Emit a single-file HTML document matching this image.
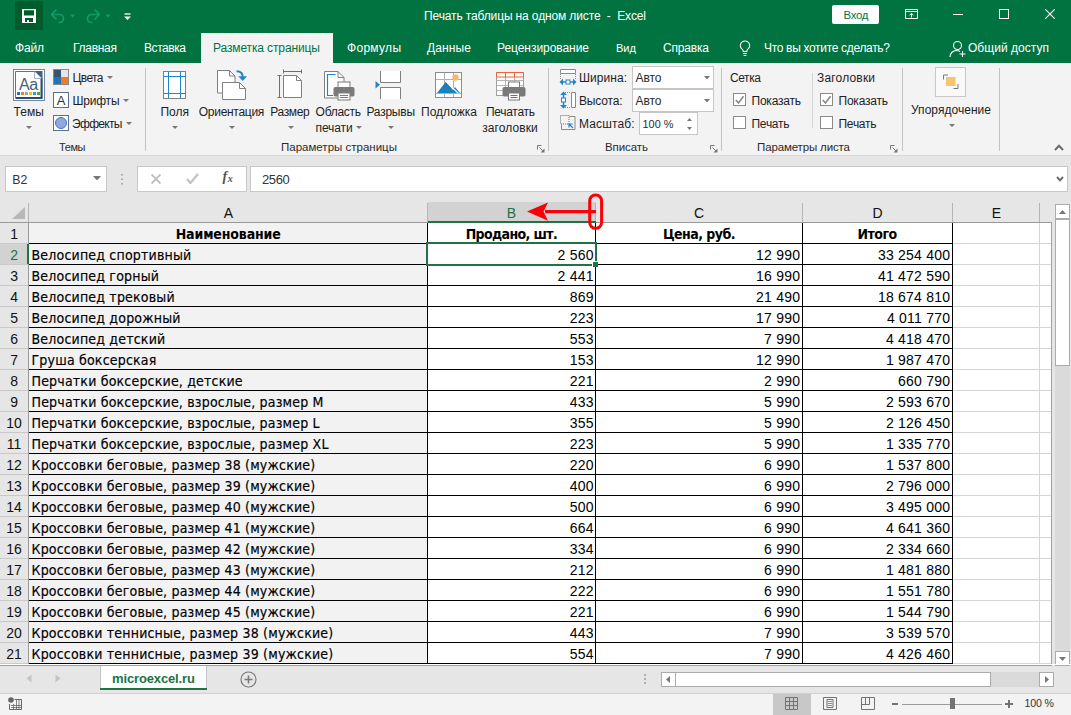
<!DOCTYPE html>
<html lang="ru"><head><meta charset="utf-8"><title>Печать таблицы на одном листе - Excel</title>
<style>
html,body{margin:0;padding:0}
body{width:1071px;height:715px;overflow:hidden;position:relative;background:#fff;font:12px "Liberation Sans",sans-serif;color:#1E1E1E}
.b{position:absolute;box-sizing:border-box;display:block}
.t{position:absolute;white-space:pre;line-height:20px;height:20px}
</style></head>
<body>
<div class="b" style="left:0px;top:0px;width:1071px;height:63px;background:#007341;"></div>
<div class="b" style="left:15px;top:1px;width:28px;height:29px;background:#005C2A;"></div>
<svg class="b" style="left:22px;top:9px" width="14" height="14" viewBox="0 0 14 14"><path d="M0 0h14v14H0z M2 1.300v5.200h10V1.300z M3 8.900V13h8V8.900z" fill="#fff" fill-rule="evenodd"/><rect x="5" y="11.200" width="2" height="1.800" fill="#fff"/></svg>
<svg class="b" style="left:49px;top:8px" width="30" height="16" viewBox="0 0 30 16"><path d="M2.500 6.500 L7.500 1.500 M2.500 6.500 L7.500 11.500 M2.500 6.500 H10.500 a4 4 0 0 1 0 8 H9.500" fill="none" stroke="#149A66" stroke-width="1.700"/><path d="M21 6.500h5l-2.500 3z" fill="#149A66"/></svg>
<svg class="b" style="left:85px;top:8px" width="30" height="16" viewBox="0 0 30 16"><path d="M14.500 6.500 L9.500 1.500 M14.500 6.500 L9.500 11.500 M14.500 6.500 H6.500 a4 4 0 0 0 0 8 H7.500" fill="none" stroke="#149A66" stroke-width="1.700"/><path d="M20.500 6.500h5l-2.500 3z" fill="#149A66"/></svg>
<svg class="b" style="left:124px;top:12.5px" width="7" height="8" viewBox="0 0 7 8"><path d="M0.500 1h6" stroke="#fff" stroke-width="1.300"/><path d="M0 3.500h7l-3.500 3.500z" fill="#fff"/></svg>
<span class="t" style="left:424.0px;top:6px;color:#fff;letter-spacing:-0.13px;">Печать таблицы на одном листе  -  Excel</span>
<div class="b" style="left:832px;top:5px;width:47px;height:19px;background:#fff;border-radius:2px"></div>
<span class="t" style="left:843.5px;top:5px;font-size:11.4px;color:#007341;letter-spacing:-0.26px;">Вход</span>
<svg class="b" style="left:905px;top:9px" width="13" height="10" viewBox="0 0 13 10"><path d="M0.5 0.5h12v9h-12z M0.5 2.5h12" fill="none" stroke="#fff" stroke-width="1"/><path d="M6.5 8.5V4.500 M4.500 6.300 6.500 4.300l2 2" fill="none" stroke="#fff" stroke-width="1"/></svg>
<div class="b" style="left:953px;top:14px;width:10px;height:1px;background:#fff;"></div>
<div class="b" style="left:999px;top:9px;width:10px;height:10px;border:1px solid #fff;"></div>
<svg class="b" style="left:1045px;top:9px" width="10" height="10" viewBox="0 0 10 10"><path d="M0.3 0.3l9.4 9.4M9.7 0.3l-9.4 9.4" stroke="#fff" stroke-width="1.1"/></svg>
<div class="b" style="left:201px;top:33px;width:132px;height:30px;background:#F3F3F3;"></div>
<span class="t" style="left:15.0px;top:38px;color:#fff;letter-spacing:-0.17px;">Файл</span>
<span class="t" style="left:73.0px;top:38px;color:#fff;letter-spacing:-0.28px;">Главная</span>
<span class="t" style="left:144.0px;top:38px;color:#fff;letter-spacing:-0.43px;">Вставка</span>
<span class="t" style="left:213.0px;top:38px;color:#007341;letter-spacing:-0.12px;">Разметка страницы</span>
<span class="t" style="left:347.0px;top:38px;color:#fff;letter-spacing:0.3px;">Формулы</span>
<span class="t" style="left:427.0px;top:38px;color:#fff;letter-spacing:0.13px;">Данные</span>
<span class="t" style="left:497.0px;top:38px;color:#fff;letter-spacing:-0.05px;">Рецензирование</span>
<span class="t" style="left:616.0px;top:38px;font-size:11.1px;color:#fff;letter-spacing:-0.04px;">Вид</span>
<span class="t" style="left:663.0px;top:38px;color:#fff;letter-spacing:-0.18px;">Справка</span>
<span class="t" style="left:764.0px;top:38px;color:#fff;letter-spacing:-0.32px;">Что вы хотите сделать?</span>
<span class="t" style="left:968.0px;top:38px;color:#fff;letter-spacing:0.03px;">Общий доступ</span>
<svg class="b" style="left:738.5px;top:40px" width="12" height="17" viewBox="0 0 12 17"><path d="M6 1a4.6 4.6 0 0 0-2.6 8.4c.5.5.8 1.2.8 2.1h3.6c0-.9.3-1.6.8-2.1A4.6 4.6 0 0 0 6 1z" fill="none" stroke="#fff" stroke-width="1.1"/><path d="M4.2 13.5h3.6M4.6 15.5h2.8" stroke="#fff" stroke-width="1.1"/></svg>
<svg class="b" style="left:948.5px;top:39.5px" width="18" height="18" viewBox="0 0 18 18"><circle cx="8.5" cy="5.5" r="4" fill="none" stroke="#fff" stroke-width="1.1"/><path d="M1 17c0-4 3-6.5 6.5-6.5 1.5 0 2.6.4 3.4 1" fill="none" stroke="#fff" stroke-width="1.1"/><path d="M13.5 11v6M10.5 14h6" stroke="#fff" stroke-width="1.1"/></svg>
<div class="b" style="left:0px;top:63px;width:1071px;height:92px;background:#F3F3F3;"></div>
<div class="b" style="left:0px;top:155px;width:1071px;height:1px;background:#D6D6D6;"></div>
<svg class="b" style="left:13px;top:69px" width="32" height="32" viewBox="0 0 32 32"><rect x="0.500" y="0.500" width="31" height="31" fill="#fff" stroke="#6F86A3"/>
<path d="M2.500 2.500H22l7 7V29.500H2.500z" fill="#fff" stroke="#5B7797" stroke-width="1"/>
<path d="M28.500 9v20H3" fill="none" stroke="#2F4B6B" stroke-width="2"/>
<path d="M21.500 2h8v8z" fill="#44607F"/><path d="M21.500 2.500v7h7" fill="#fff" stroke="#8A9DB5" stroke-width="0.800"/>
<text x="6" y="21" font-family="Liberation Sans, sans-serif" font-size="16" letter-spacing="-0.400" fill="#44607F">Aa</text>
<rect x="4" y="23" width="3" height="3" fill="#1E73BE"/><rect x="8" y="23" width="3" height="3" fill="#F47A20"/><rect x="12" y="23" width="3" height="3" fill="#A5A5A5"/><rect x="16" y="23" width="3" height="3" fill="#FFC000"/><rect x="20" y="23" width="3" height="3" fill="#2E9BD6"/><rect x="24" y="23" width="3" height="3" fill="#3DAE2B"/></svg>
<span class="t" style="left:13.4px;top:102px;letter-spacing:0.09px;">Темы</span>
<svg class="b" style="left:25.5px;top:126.0px" width="6" height="3" viewBox="0 0 6 3"><path d="M0 0h6l-3.0 3z" fill="#777"/></svg>
<svg class="b" style="left:53px;top:69px" width="16" height="16" viewBox="0 0 16 16"><rect x="0.5" y="0.5" width="15" height="15" fill="#E3E3E3" stroke="#8A8A8A"/><rect x="1" y="1" width="7" height="7" fill="#3A5272"/><rect x="8" y="1" width="7" height="7" fill="#E6E6E6"/><rect x="1" y="8" width="7" height="7" fill="#1E73BE"/><rect x="8" y="8" width="7" height="7" fill="#F47A20"/></svg>
<span class="t" style="left:72.5px;top:68px;letter-spacing:-0.61px;">Цвета</span>
<svg class="b" style="left:106.5px;top:76.0px" width="6" height="3" viewBox="0 0 6 3"><path d="M0 0h6l-3.0 3z" fill="#777"/></svg>
<svg class="b" style="left:53px;top:92px" width="16" height="16" viewBox="0 0 16 16"><rect x="0.5" y="0.5" width="15" height="15" fill="#fff" stroke="#5B6F8C"/><text x="8" y="13" text-anchor="middle" font-family="Liberation Sans, sans-serif" font-size="13" fill="#333">A</text></svg>
<span class="t" style="left:72.5px;top:91px;letter-spacing:-0.22px;">Шрифты</span>
<svg class="b" style="left:122.5px;top:99.0px" width="6" height="3" viewBox="0 0 6 3"><path d="M0 0h6l-3.0 3z" fill="#777"/></svg>
<svg class="b" style="left:53px;top:115px" width="16" height="16" viewBox="0 0 16 16"><rect x="0.5" y="0.5" width="15" height="15" fill="#fff" stroke="#5B6F8C"/><circle cx="8" cy="8" r="5.5" fill="#8EA9DB" stroke="#4472C4"/></svg>
<span class="t" style="left:72.0px;top:114px;letter-spacing:-0.68px;">Эффекты</span>
<svg class="b" style="left:125.5px;top:122.0px" width="6" height="3" viewBox="0 0 6 3"><path d="M0 0h6l-3.0 3z" fill="#777"/></svg>
<span class="t" style="left:59.0px;top:137px;font-size:11px;color:#2b2b2b;letter-spacing:-0.4px;">Темы</span>
<div class="b" style="left:145px;top:68px;width:1px;height:83px;background:#C2C2C2;"></div>
<svg class="b" style="left:163px;top:71px" width="24" height="28" viewBox="0 0 24 28"><rect x="0.5" y="0.5" width="22" height="27" fill="#fff" stroke="#808080"/><path d="M5.5 1v26M17.5 1v26M1 5.5h21M1 22.5h21" stroke="#1E87C9" stroke-width="1"/></svg>
<span class="t" style="left:160.5px;top:102px;letter-spacing:-0.02px;">Поля</span>
<svg class="b" style="left:171.5px;top:126.0px" width="6" height="3" viewBox="0 0 6 3"><path d="M0 0h6l-3.0 3z" fill="#777"/></svg>
<svg class="b" style="left:217px;top:69px" width="31" height="32" viewBox="0 0 31 32"><path d="M0.500 1.500H12.500l5.500 5.500v17H0.500z" fill="#fff" stroke="#808080"/><path d="M12.500 1.500V7h5.500" fill="none" stroke="#808080"/><path d="M5.500 13.500H22.500l6 6v11H5.500z" fill="#fff" stroke="#808080"/><path d="M22.500 13.500V19.500h6" fill="none" stroke="#808080"/><path d="M19.500 2.300c4 0 6.300 2.200 6.300 6.200" fill="none" stroke="#1E87C9" stroke-width="2"/><path d="M21.300 7.300l4.500 4.700 4.200-4.700z" fill="#1E87C9"/></svg>
<span class="t" style="left:198.8px;top:102px;letter-spacing:-0.29px;">Ориентация</span>
<svg class="b" style="left:228.5px;top:126.0px" width="6" height="3" viewBox="0 0 6 3"><path d="M0 0h6l-3.0 3z" fill="#777"/></svg>
<svg class="b" style="left:277px;top:69px" width="26" height="30" viewBox="0 0 26 30"><path d="M6.500 6.500H19.500l5 5v17H6.500z" fill="#fff" stroke="#808080"/><path d="M19.500 6.500V11.500h5" fill="none" stroke="#808080"/><path d="M6 2.500h19M6.500 0.500v4M24.500 0.500v4M2.500 6.500v22M0.500 6.500h4M0.500 28.500h4" stroke="#1E87C9" stroke-width="1"/></svg>
<span class="t" style="left:270.3px;top:102px;letter-spacing:-0.39px;">Размер</span>
<svg class="b" style="left:287.5px;top:126.0px" width="6" height="3" viewBox="0 0 6 3"><path d="M0 0h6l-3.0 3z" fill="#777"/></svg>
<svg class="b" style="left:324px;top:71px" width="32" height="32" viewBox="0 0 32 32"><path d="M0.500 0.500H14l6 6V27H0.500z" fill="#fff" stroke="#808080"/><path d="M14 0.500V6.500h6" fill="none" stroke="#808080"/><path d="M11.500 3.500H3.500v21H9" fill="none" stroke="#1E87C9" stroke-width="1.200"/><rect x="14" y="11" width="12" height="6" fill="#fff" stroke="#7A7A7A"/><rect x="9.5" y="16" width="21" height="9.500" rx="1.800" fill="#7A7A7A"/><rect x="14" y="22" width="12" height="7" fill="#fff" stroke="#7A7A7A"/><path d="M16 24.5h8M16 26.5h8" stroke="#7A7A7A" stroke-width="1"/></svg>
<span class="t" style="left:315.6px;top:102px;letter-spacing:-0.27px;">Область</span>
<span class="t" style="left:315.6px;top:118px;letter-spacing:-0.13px;">печати</span>
<svg class="b" style="left:355.5px;top:126.0px" width="6" height="3" viewBox="0 0 6 3"><path d="M0 0h6l-3.0 3z" fill="#777"/></svg>
<svg class="b" style="left:375px;top:71px" width="27" height="28" viewBox="0 0 27 28"><path d="M5.500 0v11.500h20V0M5.500 28v-11.500h20V28" fill="#fff" stroke="#808080"/><path d="M0.500 10l4.500 3.700L0.500 17.400z" fill="#1E87C9"/></svg>
<span class="t" style="left:366.5px;top:102px;letter-spacing:-0.24px;">Разрывы</span>
<svg class="b" style="left:387.5px;top:126.0px" width="6" height="3" viewBox="0 0 6 3"><path d="M0 0h6l-3.0 3z" fill="#777"/></svg>
<svg class="b" style="left:435px;top:72px" width="28" height="26" viewBox="0 0 28 26"><rect x="0.500" y="0.500" width="26" height="25" fill="#fff" stroke="#8C8C8C"/><path d="M1 7.500h25M1 21.500h25M9.500 1v24M18.500 1v24" stroke="#B0B0B0"/><circle cx="20.500" cy="5.500" r="3.200" fill="#F9B863"/><path d="M2 21l9-11.500 7 8.500 2-3 5 6z" fill="#1B7FC0"/><path d="M10.500 9l13 12.500" stroke="#fff" stroke-width="1.100"/></svg>
<span class="t" style="left:421.0px;top:102px;letter-spacing:0.01px;">Подложка</span>
<svg class="b" style="left:496px;top:72px" width="32" height="30" viewBox="0 0 32 30"><rect x="0.500" y="0.500" width="27" height="23" fill="#fff" stroke="#A0A0A0"/><path d="M1 8.500h26M1 13.500h26M1 18.500h26M9.500 5v18M18.500 5v18" stroke="#B5B5B5"/><path d="M0.500 0.500h27v4.500h-27zM9.500 0.500v4.500M18.500 0.500v4.500" fill="#fff" stroke="#F0623A" stroke-width="1"/><rect x="12.5" y="10" width="11" height="6" fill="#fff" stroke="#7A7A7A"/><rect x="6.5" y="15" width="23" height="9.500" rx="1.800" fill="#7A7A7A"/><rect x="12.5" y="21" width="11" height="7" fill="#fff" stroke="#7A7A7A"/><path d="M14.5 23.5h7M14.5 25.5h7" stroke="#1E87C9" stroke-width="1"/></svg>
<span class="t" style="left:486.0px;top:102px;letter-spacing:-0.3px;">Печатать</span>
<span class="t" style="left:482.2px;top:118px;letter-spacing:0.08px;">заголовки</span>
<span class="t" style="left:281.0px;top:137px;font-size:11.5px;color:#2b2b2b;">Параметры страницы</span>
<svg class="b" style="left:536.5px;top:144.5px" width="8" height="8" viewBox="0 0 8 8"><path d="M0.500 4.500V0.500H4.500" fill="none" stroke="#777" stroke-width="1"/><path d="M2.500 2.500L6 6" fill="none" stroke="#777" stroke-width="1"/><path d="M7.500 3.500v4h-4z" fill="#777"/></svg>
<div class="b" style="left:548px;top:68px;width:1px;height:83px;background:#C2C2C2;"></div>
<svg class="b" style="left:559px;top:69px" width="18" height="17" viewBox="0 0 18 17"><path d="M1.500 0.500h15v4h-15z" fill="#fff" stroke="#8A8A8A"/><path d="M1.500 5v6M16.500 5v6" stroke="#8A8A8A" stroke-width="1" stroke-dasharray="1 1"/><path d="M2 13h14" stroke="#1E87C9" stroke-width="1.500"/><path d="M0.500 13l3.500-3.500v7zM17.500 13l-3.500-3.500v7z" fill="#1E87C9"/><rect x="7" y="11" width="4" height="4" fill="#fff" stroke="#1E87C9"/></svg>
<svg class="b" style="left:559px;top:91px" width="18" height="18" viewBox="0 0 18 18"><path d="M12.500 1.500h4v15h-4z" fill="#fff" stroke="#8A8A8A"/><path d="M6 1.500h6M6 16.500h6" stroke="#8A8A8A" stroke-width="1" stroke-dasharray="1 1"/><path d="M4.500 2v14" stroke="#1E87C9" stroke-width="1.500"/><path d="M4.500 0.500l-3.500 3.500h7zM4.500 17.500l-3.500-3.500h7z" fill="#1E87C9"/><rect x="2.500" y="7" width="4" height="4" fill="#fff" stroke="#1E87C9"/></svg>
<svg class="b" style="left:560px;top:115px" width="16" height="16" viewBox="0 0 16 16"><rect x="0.500" y="0.500" width="8.500" height="8.500" fill="none" stroke="#666" stroke-dasharray="1 1"/><path d="M9.500 1.500h5.500v13h-13.500v-5" fill="none" stroke="#8A8A8A"/><path d="M13 13l-4-4M9 12.500V9h3.500" fill="none" stroke="#1E87C9" stroke-width="1.200"/></svg>
<span class="t" style="left:579.0px;top:68px;letter-spacing:0.05px;">Ширина:</span>
<span class="t" style="left:579.0px;top:91px;letter-spacing:-0.17px;">Высота:</span>
<span class="t" style="left:579.0px;top:114px;letter-spacing:0.12px;">Масштаб:</span>
<div class="b" style="left:632px;top:66px;width:82px;height:23px;background:#fff;border:1px solid #C6C6C6;"></div>
<div class="b" style="left:632px;top:89px;width:82px;height:23px;background:#fff;border:1px solid #C6C6C6;"></div>
<span class="t" style="left:635.5px;top:68px;color:#2b2b2b;letter-spacing:-0.05px;">Авто</span>
<svg class="b" style="left:703.5px;top:75.8px" width="6" height="3.5" viewBox="0 0 6 3.5"><path d="M0 0h6l-3.0 3.5z" fill="#777"/></svg>
<span class="t" style="left:635.5px;top:91px;color:#2b2b2b;letter-spacing:-0.05px;">Авто</span>
<svg class="b" style="left:703.5px;top:98.8px" width="6" height="3.5" viewBox="0 0 6 3.5"><path d="M0 0h6l-3.0 3.5z" fill="#777"/></svg>
<div class="b" style="left:639px;top:112px;width:59px;height:23px;background:#fff;border:1px solid #C6C6C6;"></div>
<span class="t" style="left:642.5px;top:114px;font-size:10.9px;color:#2b2b2b;letter-spacing:0.03px;">100 %</span>
<svg class="b" style="left:687px;top:117.5px" width="5" height="12" viewBox="0 0 5 12"><path d="M0 3l2.500-3 2.500 3zM0 9l2.500 3 2.500-3z" fill="#777"/></svg>
<span class="t" style="left:605.0px;top:137px;font-size:11.5px;color:#2b2b2b;letter-spacing:-0.08px;">Вписать</span>
<svg class="b" style="left:709.5px;top:144.5px" width="8" height="8" viewBox="0 0 8 8"><path d="M0.500 4.500V0.500H4.500" fill="none" stroke="#777" stroke-width="1"/><path d="M2.500 2.500L6 6" fill="none" stroke="#777" stroke-width="1"/><path d="M7.500 3.500v4h-4z" fill="#777"/></svg>
<div class="b" style="left:721px;top:68px;width:1px;height:83px;background:#C2C2C2;"></div>
<span class="t" style="left:730.0px;top:68px;letter-spacing:-0.41px;">Сетка</span>
<div class="b" style="left:733px;top:93px;width:13px;height:13px;background:#fff;border:1px solid #8A8A8A;"></div><svg class="b" style="left:735px;top:95px" width="10" height="10" viewBox="0 0 10 10"><path d="M0.800 5l2.700 3L8.500 1.200" fill="none" stroke="#8A8A8A" stroke-width="1.700"/></svg>
<span class="t" style="left:751.5px;top:91px;letter-spacing:-0.22px;">Показать</span>
<div class="b" style="left:733px;top:116px;width:13px;height:13px;background:#fff;border:1px solid #8A8A8A;"></div>
<span class="t" style="left:751.5px;top:114px;letter-spacing:-0.26px;">Печать</span>
<div class="b" style="left:812px;top:73px;width:1px;height:55px;background:#D4D4D4;"></div>
<span class="t" style="left:817.0px;top:68px;letter-spacing:0.18px;">Заголовки</span>
<div class="b" style="left:820px;top:93px;width:13px;height:13px;background:#fff;border:1px solid #8A8A8A;"></div><svg class="b" style="left:822px;top:95px" width="10" height="10" viewBox="0 0 10 10"><path d="M0.800 5l2.700 3L8.500 1.200" fill="none" stroke="#8A8A8A" stroke-width="1.700"/></svg>
<span class="t" style="left:838.5px;top:91px;letter-spacing:-0.22px;">Показать</span>
<div class="b" style="left:820px;top:116px;width:13px;height:13px;background:#fff;border:1px solid #8A8A8A;"></div>
<span class="t" style="left:838.5px;top:114px;letter-spacing:-0.26px;">Печать</span>
<span class="t" style="left:757.0px;top:137px;font-size:11.5px;color:#2b2b2b;letter-spacing:-0.14px;">Параметры листа</span>
<svg class="b" style="left:890px;top:144.5px" width="8" height="8" viewBox="0 0 8 8"><path d="M0.500 4.500V0.500H4.500" fill="none" stroke="#777" stroke-width="1"/><path d="M2.500 2.500L6 6" fill="none" stroke="#777" stroke-width="1"/><path d="M7.500 3.500v4h-4z" fill="#777"/></svg>
<div class="b" style="left:902px;top:68px;width:1px;height:83px;background:#C2C2C2;"></div>
<div class="b" style="left:935px;top:67px;width:31px;height:30px;background:#F9F9F9;border:1px solid #C8C8C8;"></div>
<svg class="b" style="left:942px;top:74px" width="17" height="16" viewBox="0 0 17 16"><path d="M1.500 5.500V1H6M11.500 14.500H16v-4.500" fill="none" stroke="#777" stroke-width="1"/><rect x="4" y="3" width="9.500" height="9" fill="#F9C56A"/></svg>
<span class="t" style="left:911.0px;top:100px;letter-spacing:0.03px;">Упорядочение</span>
<svg class="b" style="left:948.5px;top:124.0px" width="6" height="3" viewBox="0 0 6 3"><path d="M0 0h6l-3.0 3z" fill="#777"/></svg>
<div class="b" style="left:999px;top:68px;width:1px;height:83px;background:#C2C2C2;"></div>
<svg class="b" style="left:1053.5px;top:143.5px" width="10" height="7" viewBox="0 0 10 7"><path d="M1 6L5 1.800 9 6" fill="none" stroke="#6A6A6A" stroke-width="2"/></svg>
<div class="b" style="left:0px;top:156px;width:1071px;height:45px;background:#E6E6E6;"></div>
<div class="b" style="left:5px;top:166px;width:102px;height:26px;background:#fff;border:1px solid #C8C8C8;"></div>
<span class="t" style="left:12.3px;top:170px;font-size:12.3px;color:#333;letter-spacing:-0.05px;">B2</span>
<svg class="b" style="left:92.5px;top:175.8px" width="8" height="4.5" viewBox="0 0 8 4.5"><path d="M0 0h8l-4.0 4.5z" fill="#777"/></svg>
<svg class="b" style="left:121px;top:174px" width="2" height="11" viewBox="0 0 2 11"><path d="M0 0h2v1.500H0zM0 4.500h2V6H0zM0 9h2v1.500H0z" fill="#AAA"/></svg>
<div class="b" style="left:137px;top:166px;width:110px;height:26px;background:#fff;border:1px solid #C8C8C8;"></div>
<svg class="b" style="left:151px;top:174px" width="10" height="10" viewBox="0 0 10 10"><path d="M0.500 0.500l9 9M9.500 0.500l-9 9" stroke="#BDBDBD" stroke-width="1.900"/></svg>
<svg class="b" style="left:186px;top:173px" width="13" height="11" viewBox="0 0 13 11"><path d="M1 6l3.500 4L12 1" fill="none" stroke="#C4C4C4" stroke-width="2.400"/></svg>
<span class="t" style="left:222.500px;top:169px;font:italic bold 14px 'Liberation Serif',serif;color:#555">f<span style="font-size:10px;position:relative;top:1px;left:0.500px">x</span></span>
<div class="b" style="left:250px;top:166px;width:818px;height:26px;background:#fff;border:1px solid #C8C8C8;"></div>
<span class="t" style="left:262.0px;top:170px;font-size:13px;color:#333;letter-spacing:-0.41px;">2560</span>
<svg class="b" style="left:1055.5px;top:175.5px" width="8" height="6" viewBox="0 0 8 6"><path d="M1 1l3 3.300 3-3.300" fill="none" stroke="#666" stroke-width="1.900"/></svg>
<div class="b" style="left:0px;top:201px;width:1052px;height:464px;background:#fff;"></div>
<div class="b" style="left:0px;top:201px;width:1052px;height:21px;background:#E6E6E6;"></div>
<div class="b" style="left:0px;top:222px;width:28px;height:443px;background:#E6E6E6;"></div>
<div class="b" style="left:428px;top:202px;width:168px;height:20px;background:#D2D2D2;"></div>
<div class="b" style="left:0px;top:244px;width:28px;height:21px;background:#D2D2D2;"></div>
<div class="b" style="left:29px;top:223px;width:398px;height:441px;background:#F2F2F2;"></div>
<div class="b" style="left:28px;top:203px;width:1px;height:19px;background:#B5B5B5;"></div>
<div class="b" style="left:427px;top:203px;width:1px;height:19px;background:#B5B5B5;"></div>
<div class="b" style="left:595px;top:203px;width:1px;height:19px;background:#B5B5B5;"></div>
<div class="b" style="left:802px;top:203px;width:1px;height:19px;background:#B5B5B5;"></div>
<div class="b" style="left:952px;top:203px;width:1px;height:19px;background:#B5B5B5;"></div>
<div class="b" style="left:1039px;top:203px;width:1px;height:19px;background:#B5B5B5;"></div>
<div class="b" style="left:0px;top:222px;width:1052px;height:1px;background:#9A9A9A;"></div>
<div class="b" style="left:28px;top:222px;width:1px;height:443px;background:#ABABAB;"></div>
<div class="b" style="left:953px;top:243px;width:99px;height:1px;background:#D4D4D4;"></div>
<div class="b" style="left:0px;top:243px;width:28px;height:1px;background:#C9C9C9;"></div>
<div class="b" style="left:953px;top:264px;width:99px;height:1px;background:#D4D4D4;"></div>
<div class="b" style="left:0px;top:264px;width:28px;height:1px;background:#C9C9C9;"></div>
<div class="b" style="left:953px;top:285px;width:99px;height:1px;background:#D4D4D4;"></div>
<div class="b" style="left:0px;top:285px;width:28px;height:1px;background:#C9C9C9;"></div>
<div class="b" style="left:953px;top:306px;width:99px;height:1px;background:#D4D4D4;"></div>
<div class="b" style="left:0px;top:306px;width:28px;height:1px;background:#C9C9C9;"></div>
<div class="b" style="left:953px;top:327px;width:99px;height:1px;background:#D4D4D4;"></div>
<div class="b" style="left:0px;top:327px;width:28px;height:1px;background:#C9C9C9;"></div>
<div class="b" style="left:953px;top:348px;width:99px;height:1px;background:#D4D4D4;"></div>
<div class="b" style="left:0px;top:348px;width:28px;height:1px;background:#C9C9C9;"></div>
<div class="b" style="left:953px;top:369px;width:99px;height:1px;background:#D4D4D4;"></div>
<div class="b" style="left:0px;top:369px;width:28px;height:1px;background:#C9C9C9;"></div>
<div class="b" style="left:953px;top:390px;width:99px;height:1px;background:#D4D4D4;"></div>
<div class="b" style="left:0px;top:390px;width:28px;height:1px;background:#C9C9C9;"></div>
<div class="b" style="left:953px;top:411px;width:99px;height:1px;background:#D4D4D4;"></div>
<div class="b" style="left:0px;top:411px;width:28px;height:1px;background:#C9C9C9;"></div>
<div class="b" style="left:953px;top:432px;width:99px;height:1px;background:#D4D4D4;"></div>
<div class="b" style="left:0px;top:432px;width:28px;height:1px;background:#C9C9C9;"></div>
<div class="b" style="left:953px;top:453px;width:99px;height:1px;background:#D4D4D4;"></div>
<div class="b" style="left:0px;top:453px;width:28px;height:1px;background:#C9C9C9;"></div>
<div class="b" style="left:953px;top:474px;width:99px;height:1px;background:#D4D4D4;"></div>
<div class="b" style="left:0px;top:474px;width:28px;height:1px;background:#C9C9C9;"></div>
<div class="b" style="left:953px;top:495px;width:99px;height:1px;background:#D4D4D4;"></div>
<div class="b" style="left:0px;top:495px;width:28px;height:1px;background:#C9C9C9;"></div>
<div class="b" style="left:953px;top:516px;width:99px;height:1px;background:#D4D4D4;"></div>
<div class="b" style="left:0px;top:516px;width:28px;height:1px;background:#C9C9C9;"></div>
<div class="b" style="left:953px;top:537px;width:99px;height:1px;background:#D4D4D4;"></div>
<div class="b" style="left:0px;top:537px;width:28px;height:1px;background:#C9C9C9;"></div>
<div class="b" style="left:953px;top:558px;width:99px;height:1px;background:#D4D4D4;"></div>
<div class="b" style="left:0px;top:558px;width:28px;height:1px;background:#C9C9C9;"></div>
<div class="b" style="left:953px;top:579px;width:99px;height:1px;background:#D4D4D4;"></div>
<div class="b" style="left:0px;top:579px;width:28px;height:1px;background:#C9C9C9;"></div>
<div class="b" style="left:953px;top:600px;width:99px;height:1px;background:#D4D4D4;"></div>
<div class="b" style="left:0px;top:600px;width:28px;height:1px;background:#C9C9C9;"></div>
<div class="b" style="left:953px;top:621px;width:99px;height:1px;background:#D4D4D4;"></div>
<div class="b" style="left:0px;top:621px;width:28px;height:1px;background:#C9C9C9;"></div>
<div class="b" style="left:953px;top:642px;width:99px;height:1px;background:#D4D4D4;"></div>
<div class="b" style="left:0px;top:642px;width:28px;height:1px;background:#C9C9C9;"></div>
<div class="b" style="left:953px;top:663px;width:99px;height:1px;background:#D4D4D4;"></div>
<div class="b" style="left:0px;top:663px;width:28px;height:1px;background:#C9C9C9;"></div>
<div class="b" style="left:1039px;top:223px;width:1px;height:442px;background:#D4D4D4;"></div>
<div class="b" style="left:1051px;top:222px;width:1px;height:444px;background:#A0A0A0;"></div>
<div class="b" style="left:28px;top:243px;width:925px;height:1px;background:#000;"></div>
<div class="b" style="left:28px;top:264px;width:925px;height:1px;background:#000;"></div>
<div class="b" style="left:28px;top:285px;width:925px;height:1px;background:#000;"></div>
<div class="b" style="left:28px;top:306px;width:925px;height:1px;background:#000;"></div>
<div class="b" style="left:28px;top:327px;width:925px;height:1px;background:#000;"></div>
<div class="b" style="left:28px;top:348px;width:925px;height:1px;background:#000;"></div>
<div class="b" style="left:28px;top:369px;width:925px;height:1px;background:#000;"></div>
<div class="b" style="left:28px;top:390px;width:925px;height:1px;background:#000;"></div>
<div class="b" style="left:28px;top:411px;width:925px;height:1px;background:#000;"></div>
<div class="b" style="left:28px;top:432px;width:925px;height:1px;background:#000;"></div>
<div class="b" style="left:28px;top:453px;width:925px;height:1px;background:#000;"></div>
<div class="b" style="left:28px;top:474px;width:925px;height:1px;background:#000;"></div>
<div class="b" style="left:28px;top:495px;width:925px;height:1px;background:#000;"></div>
<div class="b" style="left:28px;top:516px;width:925px;height:1px;background:#000;"></div>
<div class="b" style="left:28px;top:537px;width:925px;height:1px;background:#000;"></div>
<div class="b" style="left:28px;top:558px;width:925px;height:1px;background:#000;"></div>
<div class="b" style="left:28px;top:579px;width:925px;height:1px;background:#000;"></div>
<div class="b" style="left:28px;top:600px;width:925px;height:1px;background:#000;"></div>
<div class="b" style="left:28px;top:621px;width:925px;height:1px;background:#000;"></div>
<div class="b" style="left:28px;top:642px;width:925px;height:1px;background:#000;"></div>
<div class="b" style="left:28px;top:663px;width:925px;height:1px;background:#000;"></div>
<div class="b" style="left:427px;top:223px;width:1px;height:441px;background:#000;"></div>
<div class="b" style="left:595px;top:223px;width:1px;height:441px;background:#000;"></div>
<div class="b" style="left:802px;top:223px;width:1px;height:441px;background:#000;"></div>
<div class="b" style="left:952px;top:223px;width:1px;height:441px;background:#000;"></div>
<div class="b" style="left:28px;top:222px;width:1px;height:442px;background:#9A9A9A;"></div>
<div class="b" style="left:428px;top:221px;width:168px;height:2px;background:#217346;"></div>
<div class="b" style="left:27px;top:244px;width:2px;height:20px;background:#217346;"></div>
<div class="b" style="left:426px;top:242px;width:171px;height:24px;border:2px solid #217346;background:transparent"></div>
<div class="b" style="left:592px;top:261px;width:6px;height:6px;background:#fff;"></div>
<div class="b" style="left:593px;top:262px;width:5px;height:5px;background:#217346;"></div>
<span class="t" style="left:223.8px;top:203px;font-size:14px;color:#111;">A</span>
<span class="t" style="left:506.8px;top:203px;font-size:14px;color:#217346;">B</span>
<span class="t" style="left:693.9px;top:203px;font-size:14px;color:#111;">C</span>
<span class="t" style="left:872.4px;top:203px;font-size:14px;color:#111;">D</span>
<span class="t" style="left:991.8px;top:203px;font-size:14px;color:#111;">E</span>
<span class="t" style="left:10.2px;top:224px;font-size:14px;color:#111;">1</span>
<span class="t" style="left:175.7px;top:224px;font-size:14px;font-weight:bold;font-family:'DejaVu Sans Condensed', 'DejaVu Sans', 'Liberation Sans', sans-serif;color:#000;letter-spacing:-0.13px;">Наименование</span>
<span class="t" style="left:465.7px;top:224px;font-size:14px;font-weight:bold;font-family:'DejaVu Sans Condensed', 'DejaVu Sans', 'Liberation Sans', sans-serif;color:#000;letter-spacing:-0.62px;">Продано, шт.</span>
<span class="t" style="left:662.9px;top:224px;font-size:14px;font-weight:bold;font-family:'DejaVu Sans Condensed', 'DejaVu Sans', 'Liberation Sans', sans-serif;color:#000;letter-spacing:-0.54px;">Цена, руб.</span>
<span class="t" style="left:857.6px;top:224px;font-size:14px;font-weight:bold;font-family:'DejaVu Sans Condensed', 'DejaVu Sans', 'Liberation Sans', sans-serif;color:#000;letter-spacing:-0.56px;">Итого</span>
<span class="t" style="left:10.2px;top:245px;font-size:14px;color:#217346;">2</span>
<span class="t" style="left:31.5px;top:245px;font-size:14px;font-family:'DejaVu Sans Condensed', 'DejaVu Sans', 'Liberation Sans', sans-serif;color:#000;letter-spacing:0.19px;-webkit-text-stroke:0.15px #000;">Велосипед спортивный</span>
<span class="t" style="left:557.6px;top:245px;font-size:14px;color:#000;letter-spacing:0.22px;">2 560</span>
<span class="t" style="left:756.1px;top:245px;font-size:14px;color:#000;letter-spacing:0.22px;">12 990</span>
<span class="t" style="left:877.9px;top:245px;font-size:14px;color:#000;letter-spacing:0.22px;">33 254 400</span>
<span class="t" style="left:10.2px;top:266px;font-size:14px;color:#111;">3</span>
<span class="t" style="left:31.5px;top:266px;font-size:14px;font-family:'DejaVu Sans Condensed', 'DejaVu Sans', 'Liberation Sans', sans-serif;color:#000;letter-spacing:0.19px;-webkit-text-stroke:0.15px #000;">Велосипед горный</span>
<span class="t" style="left:557.6px;top:266px;font-size:14px;color:#000;letter-spacing:0.22px;">2 441</span>
<span class="t" style="left:756.1px;top:266px;font-size:14px;color:#000;letter-spacing:0.22px;">16 990</span>
<span class="t" style="left:877.9px;top:266px;font-size:14px;color:#000;letter-spacing:0.22px;">41 472 590</span>
<span class="t" style="left:10.2px;top:287px;font-size:14px;color:#111;">4</span>
<span class="t" style="left:31.5px;top:287px;font-size:14px;font-family:'DejaVu Sans Condensed', 'DejaVu Sans', 'Liberation Sans', sans-serif;color:#000;letter-spacing:0.19px;-webkit-text-stroke:0.15px #000;">Велосипед трековый</span>
<span class="t" style="left:569.7px;top:287px;font-size:14px;color:#000;letter-spacing:0.22px;">869</span>
<span class="t" style="left:756.1px;top:287px;font-size:14px;color:#000;letter-spacing:0.22px;">21 490</span>
<span class="t" style="left:877.9px;top:287px;font-size:14px;color:#000;letter-spacing:0.22px;">18 674 810</span>
<span class="t" style="left:10.2px;top:308px;font-size:14px;color:#111;">5</span>
<span class="t" style="left:31.5px;top:308px;font-size:14px;font-family:'DejaVu Sans Condensed', 'DejaVu Sans', 'Liberation Sans', sans-serif;color:#000;letter-spacing:0.19px;-webkit-text-stroke:0.15px #000;">Велосипед дорожный</span>
<span class="t" style="left:569.7px;top:308px;font-size:14px;color:#000;letter-spacing:0.22px;">223</span>
<span class="t" style="left:756.1px;top:308px;font-size:14px;color:#000;letter-spacing:0.22px;">17 990</span>
<span class="t" style="left:887.0px;top:308px;font-size:14px;color:#000;letter-spacing:0.22px;">4 011 770</span>
<span class="t" style="left:10.2px;top:329px;font-size:14px;color:#111;">6</span>
<span class="t" style="left:31.5px;top:329px;font-size:14px;font-family:'DejaVu Sans Condensed', 'DejaVu Sans', 'Liberation Sans', sans-serif;color:#000;letter-spacing:0.19px;-webkit-text-stroke:0.15px #000;">Велосипед детский</span>
<span class="t" style="left:569.7px;top:329px;font-size:14px;color:#000;letter-spacing:0.22px;">553</span>
<span class="t" style="left:764.1px;top:329px;font-size:14px;color:#000;letter-spacing:0.22px;">7 990</span>
<span class="t" style="left:885.9px;top:329px;font-size:14px;color:#000;letter-spacing:0.22px;">4 418 470</span>
<span class="t" style="left:10.2px;top:350px;font-size:14px;color:#111;">7</span>
<span class="t" style="left:31.5px;top:350px;font-size:14px;font-family:'DejaVu Sans Condensed', 'DejaVu Sans', 'Liberation Sans', sans-serif;color:#000;letter-spacing:0.19px;-webkit-text-stroke:0.15px #000;">Груша боксерская</span>
<span class="t" style="left:569.7px;top:350px;font-size:14px;color:#000;letter-spacing:0.22px;">153</span>
<span class="t" style="left:756.1px;top:350px;font-size:14px;color:#000;letter-spacing:0.22px;">12 990</span>
<span class="t" style="left:885.9px;top:350px;font-size:14px;color:#000;letter-spacing:0.22px;">1 987 470</span>
<span class="t" style="left:10.2px;top:371px;font-size:14px;color:#111;">8</span>
<span class="t" style="left:31.5px;top:371px;font-size:14px;font-family:'DejaVu Sans Condensed', 'DejaVu Sans', 'Liberation Sans', sans-serif;color:#000;letter-spacing:0.19px;-webkit-text-stroke:0.15px #000;">Перчатки боксерские, детские</span>
<span class="t" style="left:569.7px;top:371px;font-size:14px;color:#000;letter-spacing:0.22px;">221</span>
<span class="t" style="left:764.1px;top:371px;font-size:14px;color:#000;letter-spacing:0.22px;">2 990</span>
<span class="t" style="left:898.1px;top:371px;font-size:14px;color:#000;letter-spacing:0.22px;">660 790</span>
<span class="t" style="left:10.2px;top:392px;font-size:14px;color:#111;">9</span>
<span class="t" style="left:31.5px;top:392px;font-size:14px;font-family:'DejaVu Sans Condensed', 'DejaVu Sans', 'Liberation Sans', sans-serif;color:#000;letter-spacing:0.19px;-webkit-text-stroke:0.15px #000;">Перчатки боксерские, взрослые, размер M</span>
<span class="t" style="left:569.7px;top:392px;font-size:14px;color:#000;letter-spacing:0.22px;">433</span>
<span class="t" style="left:764.1px;top:392px;font-size:14px;color:#000;letter-spacing:0.22px;">5 990</span>
<span class="t" style="left:885.9px;top:392px;font-size:14px;color:#000;letter-spacing:0.22px;">2 593 670</span>
<span class="t" style="left:6.3px;top:413px;font-size:14px;color:#111;">10</span>
<span class="t" style="left:31.5px;top:413px;font-size:14px;font-family:'DejaVu Sans Condensed', 'DejaVu Sans', 'Liberation Sans', sans-serif;color:#000;letter-spacing:0.19px;-webkit-text-stroke:0.15px #000;">Перчатки боксерские, взрослые, размер L</span>
<span class="t" style="left:569.7px;top:413px;font-size:14px;color:#000;letter-spacing:0.22px;">355</span>
<span class="t" style="left:764.1px;top:413px;font-size:14px;color:#000;letter-spacing:0.22px;">5 990</span>
<span class="t" style="left:885.9px;top:413px;font-size:14px;color:#000;letter-spacing:0.22px;">2 126 450</span>
<span class="t" style="left:6.8px;top:434px;font-size:14px;color:#111;">11</span>
<span class="t" style="left:31.5px;top:434px;font-size:14px;font-family:'DejaVu Sans Condensed', 'DejaVu Sans', 'Liberation Sans', sans-serif;color:#000;letter-spacing:0.19px;-webkit-text-stroke:0.15px #000;">Перчатки боксерские, взрослые, размер XL</span>
<span class="t" style="left:569.7px;top:434px;font-size:14px;color:#000;letter-spacing:0.22px;">223</span>
<span class="t" style="left:764.1px;top:434px;font-size:14px;color:#000;letter-spacing:0.22px;">5 990</span>
<span class="t" style="left:885.9px;top:434px;font-size:14px;color:#000;letter-spacing:0.22px;">1 335 770</span>
<span class="t" style="left:6.3px;top:455px;font-size:14px;color:#111;">12</span>
<span class="t" style="left:31.5px;top:455px;font-size:14px;font-family:'DejaVu Sans Condensed', 'DejaVu Sans', 'Liberation Sans', sans-serif;color:#000;letter-spacing:0.19px;-webkit-text-stroke:0.15px #000;">Кроссовки беговые, размер 38 (мужские)</span>
<span class="t" style="left:569.7px;top:455px;font-size:14px;color:#000;letter-spacing:0.22px;">220</span>
<span class="t" style="left:764.1px;top:455px;font-size:14px;color:#000;letter-spacing:0.22px;">6 990</span>
<span class="t" style="left:885.9px;top:455px;font-size:14px;color:#000;letter-spacing:0.22px;">1 537 800</span>
<span class="t" style="left:6.3px;top:476px;font-size:14px;color:#111;">13</span>
<span class="t" style="left:31.5px;top:476px;font-size:14px;font-family:'DejaVu Sans Condensed', 'DejaVu Sans', 'Liberation Sans', sans-serif;color:#000;letter-spacing:0.19px;-webkit-text-stroke:0.15px #000;">Кроссовки беговые, размер 39 (мужские)</span>
<span class="t" style="left:569.7px;top:476px;font-size:14px;color:#000;letter-spacing:0.22px;">400</span>
<span class="t" style="left:764.1px;top:476px;font-size:14px;color:#000;letter-spacing:0.22px;">6 990</span>
<span class="t" style="left:885.9px;top:476px;font-size:14px;color:#000;letter-spacing:0.22px;">2 796 000</span>
<span class="t" style="left:6.3px;top:497px;font-size:14px;color:#111;">14</span>
<span class="t" style="left:31.5px;top:497px;font-size:14px;font-family:'DejaVu Sans Condensed', 'DejaVu Sans', 'Liberation Sans', sans-serif;color:#000;letter-spacing:0.19px;-webkit-text-stroke:0.15px #000;">Кроссовки беговые, размер 40 (мужские)</span>
<span class="t" style="left:569.7px;top:497px;font-size:14px;color:#000;letter-spacing:0.22px;">500</span>
<span class="t" style="left:764.1px;top:497px;font-size:14px;color:#000;letter-spacing:0.22px;">6 990</span>
<span class="t" style="left:885.9px;top:497px;font-size:14px;color:#000;letter-spacing:0.22px;">3 495 000</span>
<span class="t" style="left:6.3px;top:518px;font-size:14px;color:#111;">15</span>
<span class="t" style="left:31.5px;top:518px;font-size:14px;font-family:'DejaVu Sans Condensed', 'DejaVu Sans', 'Liberation Sans', sans-serif;color:#000;letter-spacing:0.19px;-webkit-text-stroke:0.15px #000;">Кроссовки беговые, размер 41 (мужские)</span>
<span class="t" style="left:569.7px;top:518px;font-size:14px;color:#000;letter-spacing:0.22px;">664</span>
<span class="t" style="left:764.1px;top:518px;font-size:14px;color:#000;letter-spacing:0.22px;">6 990</span>
<span class="t" style="left:885.9px;top:518px;font-size:14px;color:#000;letter-spacing:0.22px;">4 641 360</span>
<span class="t" style="left:6.3px;top:539px;font-size:14px;color:#111;">16</span>
<span class="t" style="left:31.5px;top:539px;font-size:14px;font-family:'DejaVu Sans Condensed', 'DejaVu Sans', 'Liberation Sans', sans-serif;color:#000;letter-spacing:0.19px;-webkit-text-stroke:0.15px #000;">Кроссовки беговые, размер 42 (мужские)</span>
<span class="t" style="left:569.7px;top:539px;font-size:14px;color:#000;letter-spacing:0.22px;">334</span>
<span class="t" style="left:764.1px;top:539px;font-size:14px;color:#000;letter-spacing:0.22px;">6 990</span>
<span class="t" style="left:885.9px;top:539px;font-size:14px;color:#000;letter-spacing:0.22px;">2 334 660</span>
<span class="t" style="left:6.3px;top:560px;font-size:14px;color:#111;">17</span>
<span class="t" style="left:31.5px;top:560px;font-size:14px;font-family:'DejaVu Sans Condensed', 'DejaVu Sans', 'Liberation Sans', sans-serif;color:#000;letter-spacing:0.19px;-webkit-text-stroke:0.15px #000;">Кроссовки беговые, размер 43 (мужские)</span>
<span class="t" style="left:569.7px;top:560px;font-size:14px;color:#000;letter-spacing:0.22px;">212</span>
<span class="t" style="left:764.1px;top:560px;font-size:14px;color:#000;letter-spacing:0.22px;">6 990</span>
<span class="t" style="left:885.9px;top:560px;font-size:14px;color:#000;letter-spacing:0.22px;">1 481 880</span>
<span class="t" style="left:6.3px;top:581px;font-size:14px;color:#111;">18</span>
<span class="t" style="left:31.5px;top:581px;font-size:14px;font-family:'DejaVu Sans Condensed', 'DejaVu Sans', 'Liberation Sans', sans-serif;color:#000;letter-spacing:0.19px;-webkit-text-stroke:0.15px #000;">Кроссовки беговые, размер 44 (мужские)</span>
<span class="t" style="left:569.7px;top:581px;font-size:14px;color:#000;letter-spacing:0.22px;">222</span>
<span class="t" style="left:764.1px;top:581px;font-size:14px;color:#000;letter-spacing:0.22px;">6 990</span>
<span class="t" style="left:885.9px;top:581px;font-size:14px;color:#000;letter-spacing:0.22px;">1 551 780</span>
<span class="t" style="left:6.3px;top:602px;font-size:14px;color:#111;">19</span>
<span class="t" style="left:31.5px;top:602px;font-size:14px;font-family:'DejaVu Sans Condensed', 'DejaVu Sans', 'Liberation Sans', sans-serif;color:#000;letter-spacing:0.19px;-webkit-text-stroke:0.15px #000;">Кроссовки беговые, размер 45 (мужские)</span>
<span class="t" style="left:569.7px;top:602px;font-size:14px;color:#000;letter-spacing:0.22px;">221</span>
<span class="t" style="left:764.1px;top:602px;font-size:14px;color:#000;letter-spacing:0.22px;">6 990</span>
<span class="t" style="left:885.9px;top:602px;font-size:14px;color:#000;letter-spacing:0.22px;">1 544 790</span>
<span class="t" style="left:6.3px;top:623px;font-size:14px;color:#111;">20</span>
<span class="t" style="left:31.5px;top:623px;font-size:14px;font-family:'DejaVu Sans Condensed', 'DejaVu Sans', 'Liberation Sans', sans-serif;color:#000;letter-spacing:0.19px;-webkit-text-stroke:0.15px #000;">Кроссовки теннисные, размер 38 (мужские)</span>
<span class="t" style="left:569.7px;top:623px;font-size:14px;color:#000;letter-spacing:0.22px;">443</span>
<span class="t" style="left:764.1px;top:623px;font-size:14px;color:#000;letter-spacing:0.22px;">7 990</span>
<span class="t" style="left:885.9px;top:623px;font-size:14px;color:#000;letter-spacing:0.22px;">3 539 570</span>
<span class="t" style="left:6.3px;top:644px;font-size:14px;color:#111;">21</span>
<span class="t" style="left:31.5px;top:644px;font-size:14px;font-family:'DejaVu Sans Condensed', 'DejaVu Sans', 'Liberation Sans', sans-serif;color:#000;letter-spacing:0.19px;-webkit-text-stroke:0.15px #000;">Кроссовки теннисные, размер 39 (мужские)</span>
<span class="t" style="left:569.7px;top:644px;font-size:14px;color:#000;letter-spacing:0.22px;">554</span>
<span class="t" style="left:764.1px;top:644px;font-size:14px;color:#000;letter-spacing:0.22px;">7 990</span>
<span class="t" style="left:885.9px;top:644px;font-size:14px;color:#000;letter-spacing:0.22px;">4 426 460</span>
<svg class="b" style="left:12px;top:207px" width="13" height="12" viewBox="0 0 13 12"><path d="M13 0v12H0z" fill="#B8B8B8"/></svg>
<svg class="b" style="left:525px;top:190px" width="85" height="42" viewBox="0 0 85 42"><path d="M71 21.600H20" stroke="#FA0008" stroke-width="3.400"/><path d="M2 21.600l21-9.200-4.500 9.200 4.500 9.200z" fill="#FA0008"/><rect x="64.700" y="4.900" width="11.900" height="33.400" rx="5.900" fill="none" stroke="#FA0008" stroke-width="3"/></svg>
<div class="b" style="left:1052px;top:201px;width:19px;height:465px;background:#E6E6E6;"></div>
<div class="b" style="left:1055px;top:204px;width:15px;height:15px;background:#fff;border:1px solid #ABABAB;"></div>
<svg class="b" style="left:1059px;top:209.5px" width="7" height="4" viewBox="0 0 7 4"><path d="M0 4l3.500-4 3.500 4z" fill="#777"/></svg>
<div class="b" style="left:1055px;top:219px;width:15px;height:147px;background:#fff;border:1px solid #ABABAB;"></div>
<div class="b" style="left:1055px;top:366px;width:15px;height:285px;background:#DADADA;"></div>
<div class="b" style="left:1055px;top:651px;width:15px;height:15px;background:#fff;border:1px solid #ABABAB;"></div>
<svg class="b" style="left:1059px;top:657px" width="7" height="4" viewBox="0 0 7 4"><path d="M0 0l3.500 4 3.500-4z" fill="#777"/></svg>
<div class="b" style="left:0px;top:664px;width:1071px;height:1px;background:#fff;"></div>
<div class="b" style="left:0px;top:666px;width:1071px;height:28px;background:#E6E6E6;"></div>
<div class="b" style="left:0px;top:665px;width:1052px;height:1px;background:#A0A0A0;"></div>
<div class="b" style="left:100px;top:666px;width:107px;height:24px;background:#fff;border-left:1px solid #C6C6C6;border-right:1px solid #C6C6C6"></div>
<div class="b" style="left:100px;top:688px;width:107px;height:2px;background:#217346;"></div>
<span class="t" style="left:112.1px;top:669px;font-size:13px;font-weight:bold;color:#217346;letter-spacing:-0.15px;">microexcel.ru</span>
<svg class="b" style="left:26px;top:674px" width="6" height="9" viewBox="0 0 6 9"><path d="M5.500 0.500v8l-5-4z" fill="#C4C4C4"/></svg>
<svg class="b" style="left:55px;top:674px" width="6" height="9" viewBox="0 0 6 9"><path d="M0.500 0.500v8l5-4z" fill="#C4C4C4"/></svg>
<svg class="b" style="left:239.5px;top:670.5px" width="17" height="17" viewBox="0 0 17 17"><circle cx="8.500" cy="8.500" r="7.500" fill="none" stroke="#7A7A7A" stroke-width="1.200"/><path d="M4.500 8.500h8M8.500 4.500v8" stroke="#7A7A7A" stroke-width="1.600"/></svg>
<svg class="b" style="left:644px;top:674px" width="2" height="10" viewBox="0 0 2 10"><path d="M0 0h2v2h-2zM0 4h2v2h-2zM0 8h2v2h-2z" fill="#B0B0B0"/></svg>
<div class="b" style="left:661px;top:672px;width:15px;height:15px;background:#fff;border:1px solid #ABABAB;"></div>
<svg class="b" style="left:666px;top:676px" width="4" height="7" viewBox="0 0 4 7"><path d="M4 0v7L0 3.500z" fill="#777"/></svg>
<div class="b" style="left:675px;top:672px;width:316px;height:15px;background:#fff;border:1px solid #ABABAB;"></div>
<div class="b" style="left:991px;top:672px;width:48px;height:15px;background:#DADADA;"></div>
<div class="b" style="left:1039px;top:672px;width:15px;height:15px;background:#fff;border:1px solid #ABABAB;"></div>
<svg class="b" style="left:1045px;top:676px" width="4" height="7" viewBox="0 0 4 7"><path d="M0 0v7l4-3.500z" fill="#777"/></svg>
<div class="b" style="left:0px;top:694px;width:1071px;height:21px;background:#F3F3F3;"></div>
<div class="b" style="left:0px;top:693px;width:1071px;height:1px;background:#D0D0D0;"></div>
<svg class="b" style="left:8px;top:697px" width="14" height="13" viewBox="0 0 14 13"><circle cx="3" cy="3" r="2.800" fill="#666"/><path d="M6.500 2.500h7v10h-12v-5.500" fill="none" stroke="#666"/><path d="M3 8.500h10M3 10.500h10M5.500 7v5.500M8.500 3v9.500M11 3v9.500" stroke="#666" stroke-width="0.800"/></svg>
<div class="b" style="left:773px;top:694px;width:38px;height:21px;background:#C8C8C8;"></div>
<svg class="b" style="left:785px;top:697px" width="13" height="13" viewBox="0 0 13 13"><path d="M0.500 0.500h12v12h-12zM0.500 4.500h12M0.500 8.500h12M4.500 0.500v12M8.500 0.500v12" fill="none" stroke="#737373"/></svg>
<svg class="b" style="left:823px;top:697px" width="14" height="13" viewBox="0 0 14 13"><path d="M0.500 0.500h13v12h-13z" fill="none" stroke="#737373"/><path d="M4 2.500h6v8h-6z" fill="none" stroke="#737373"/><path d="M5 4.500h4M5 6.500h4M5 8.500h4" stroke="#737373" stroke-width="0.800"/></svg>
<svg class="b" style="left:861px;top:697px" width="14" height="13" viewBox="0 0 14 13"><path d="M0.500 0.500h13v12h-13z" fill="none" stroke="#737373"/><path d="M0.500 7.500h8v-7M4.500 0.500v7" fill="none" stroke="#737373"/></svg>
<div class="b" style="left:892px;top:703px;width:6px;height:2px;background:#737373;"></div>
<div class="b" style="left:902px;top:704px;width:100px;height:1px;background:#9A9A9A;"></div>
<div class="b" style="left:950px;top:698px;width:5px;height:11px;background:#737373;"></div>
<div class="b" style="left:1005px;top:703px;width:8px;height:2px;background:#737373;"></div>
<div class="b" style="left:1008px;top:700px;width:2px;height:8px;background:#737373;"></div>
<span class="t" style="left:1024.5px;top:693px;font-size:10.6px;color:#333;letter-spacing:-0.14px;">100 %</span>
</body></html>
